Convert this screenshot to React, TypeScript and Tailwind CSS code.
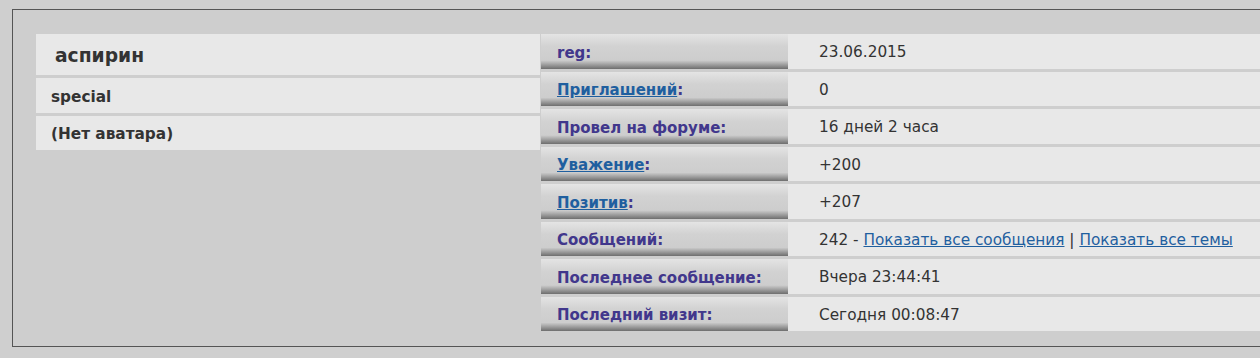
import React from "react";

type Row = { label: string; link?: boolean; value: React.ReactNode };

const rows: Row[] = [
	{ label: "reg", value: "23.06.2015" },
	{ label: "Приглашений", link: true, value: "0" },
	{ label: "Провел на форуме", value: "16 дней 2 часа" },
	{ label: "Уважение", link: true, value: "+200" },
	{ label: "Позитив", link: true, value: "+207" },
	{
		label: "Сообщений",
		value: (
			<>
				242 -{" "}
				<a href="#" className="text-[#1f5f9f] underline">
					Показать все сообщения
				</a>{" "}
				|{" "}
				<a href="#" className="text-[#1f5f9f] underline">
					Показать все темы
				</a>
			</>
		),
	},
	{ label: "Последнее сообщение", value: "Вчера 23:44:41" },
	{ label: "Последний визит", value: "Сегодня 00:08:47" },
];

const App: React.FC = () => {
	return (
		<div
			className="h-[358px] w-[1260px] overflow-hidden bg-[#cfcfcf] pl-[12px] pt-[9px] text-[15px] text-[#333]"
			style={{ fontFamily: '"DejaVu Sans", Verdana, sans-serif' }}
		>
			<div className="flex w-[1280px] items-start border border-[#555] bg-[#cecece] pb-[15px] pl-[23px] pt-[24px]">
				{/* user card */}
				<div className="flex w-[504px] flex-col gap-[3px] text-[15.3px]">
					<div className="flex h-[41px] items-center bg-[#e8e8e8] pl-[19px] pt-[3px] text-[18.7px] font-bold text-[#333]">
						аспирин
					</div>
					<div className="flex h-[35px] items-center bg-[#e8e8e8] pl-[15px] pt-[3px] font-bold">special</div>
					<div className="flex h-[34px] items-center bg-[#e8e8e8] pl-[15px] pt-[3px] font-bold">(Нет аватара)</div>
				</div>

				{/* profile fields */}
				<div className="ml-[1px] flex flex-1 flex-col gap-[3px]">
					{rows.map((r) => (
						<div key={r.label} className="flex h-[34.5px]">
							<div className="flex w-[247px] items-center bg-[linear-gradient(to_bottom,#e4e4e4_0%,#d2d2d2_35%,#cdcdcd_75%,#a8a8a8_85%,#6e6e6e_100%)] pl-[16px] pt-[3px] font-bold text-[#41378c]">
								<span>
									{r.link ? (
										<>
											<a href="#" className="text-[#1f5f9f] underline">
												{r.label}
											</a>
											:
										</>
									) : (
										r.label + ":"
									)}
								</span>
							</div>
							<div className="flex flex-1 items-center bg-[#e8e8e8] pl-[31px] pt-[3px] text-[15.3px]">
								<span>{r.value}</span>
							</div>
						</div>
					))}
				</div>
			</div>
		</div>
	);
};

export default App;
